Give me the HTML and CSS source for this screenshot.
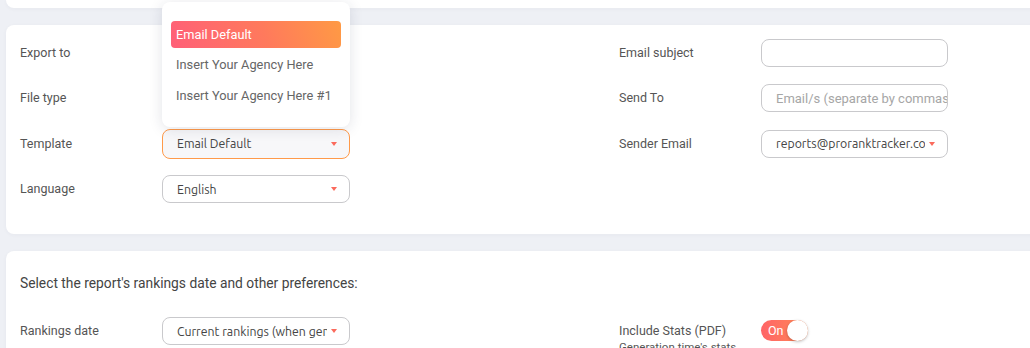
FILE: index.html
```html
<!DOCTYPE html>
<html>
<head>
<meta charset="utf-8">
<link rel="stylesheet" href="styles.css">
</head>
<body>
<div class="page">
  <div class="card card-top"></div>

  <div class="card card-form">
    <div class="form-grid">
      <div class="label c1">Export to</div>
      <div class="field c2"><div class="select"><span class="select-text"></span><span class="caret"></span></div></div>
      <div class="label c4">Email subject</div>
      <div class="field c5"><div class="input"></div></div>

      <div class="label c1">File type</div>
      <div class="field c2"><div class="select"><span class="select-text"></span><span class="caret"></span></div></div>
      <div class="label c4">Send To</div>
      <div class="field c5"><div class="input"><span class="placeholder">Email/s (separate by commas)</span></div></div>

      <div class="label c1">Template</div>
      <div class="field c2 menu-anchor">
        <div class="select select-active"><span class="select-text">Email Default</span><span class="caret"></span></div>
        <div class="menu">
          <div class="menu-item menu-item-active">Email Default</div>
          <div class="menu-item">Insert Your Agency Here</div>
          <div class="menu-item">Insert Your Agency Here #1</div>
        </div>
      </div>
      <div class="label c4">Sender Email</div>
      <div class="field c5"><div class="select"><span class="select-text">reports@proranktracker.com</span><span class="caret"></span></div></div>

      <div class="label c1">Language</div>
      <div class="field c2"><div class="select select-lang"><span class="select-text">English</span><span class="caret"></span></div></div>
    </div>
  </div>

  <div class="card card-prefs">
    <div class="prefs-title">Select the report's rankings date and other preferences:</div>
    <div class="form-grid prefs-grid">
      <div class="label c1">Rankings date</div>
      <div class="field c2"><div class="select select-lang"><span class="select-text">Current rankings (when generated)</span><span class="caret"></span></div></div>
      <div class="label c4 label-stack">
        <span>Include Stats (PDF)</span>
        <span class="sublabel">Generation time's stats</span>
      </div>
      <div class="field c5">
        <div class="toggle"><span class="toggle-text">On</span><span class="knob"></span></div>
      </div>
    </div>
  </div>
</div>
</body>
</html>
```

FILE: styles.css
```css
* { box-sizing: border-box; }
html, body { margin: 0; padding: 0; }
body {
  background: #eef0f5;
  font-family: Roboto, "Liberation Sans", Arial, sans-serif;
  color: #555;
  width: 1030px;
  height: 348px;
  overflow: hidden;
}
.page {
  padding-left: 6px;
  display: flex;
  flex-direction: column;
  gap: 17px;
}
.card {
  background: #fff;
  border-radius: 8px;
  margin-right: -20px;
  box-shadow: 0 1px 4px rgba(40, 50, 80, 0.04);
}
.card-top {
  height: 8px;
  border-radius: 0 0 8px 8px;
}
.card-form {
  height: 209px;
  padding: 13px 0 0 14px;
}
.form-grid {
  display: grid;
  grid-template-columns: 142px 188px 269px 142px 187px;
  grid-auto-rows: 30px;
  row-gap: 15.4px;
  align-items: center;
}
.c1 { grid-column: 1; }
.c2 { grid-column: 2; }
.c4 { grid-column: 4; }
.c5 { grid-column: 5; }
.label {
  font-size: 12.5px;
  color: #555;
  line-height: 16px;
}
.field { position: relative; height: 100%; display: flex; align-items: center; }
.select, .input {
  width: 100%;
  height: 28px;
  border: 1px solid #c9c9cc;
  border-radius: 8px;
  background: #fff;
  display: flex;
  align-items: center;
  padding: 0 8px 0 14px;
  overflow: hidden;
}
.select-active {
  height: 30px;
  border: 1.5px solid #ff9a4a;
  background: #f7f7f9;
}
.select-text {
  flex: 1;
  min-width: 0;
  white-space: nowrap;
  overflow: hidden;
  font-family: Ubuntu, "Open Sans", Lato, sans-serif;
  font-size: 12.3px;
  color: #444;
}
.caret {
  flex: none;
  width: 0;
  height: 0;
  border-left: 3.5px solid transparent;
  border-right: 3.5px solid transparent;
  border-top: 4px solid #fb6a5c;
  margin-left: 4px;
  margin-right: 4px;
}
.placeholder {
  white-space: nowrap;
  font-size: 13px;
  color: #a6a6a6;
}
.menu {
  position: absolute;
  left: 0;
  bottom: calc(100% + 2px);
  width: 188px;
  height: 125px;
  background: #fff;
  border-radius: 8px;
  box-shadow: 0 2px 14px rgba(30, 40, 70, 0.13);
  padding: 19px 9px 0 9px;
  display: flex;
  flex-direction: column;
  gap: 3.5px;
  z-index: 5;
}
.menu-item {
  height: 27px;
  line-height: 27px;
  padding-left: 5px;
  font-size: 12.8px;
  color: #666;
  border-radius: 4px;
  white-space: nowrap;
}
.menu-item-active {
  color: #fff;
  background: linear-gradient(70deg, #ff5f78 0%, #ff7a5c 55%, #ff9a44 100%);
}
.card-prefs {
  height: 120px;
  padding: 24px 0 0 14px;
}
.prefs-title {
  font-size: 13.8px;
  color: #444;
  line-height: 16px;
}
.prefs-grid {
  margin-top: 25px;
}
.label-stack {
  position: relative;
}
.sublabel {
  position: absolute;
  left: 0;
  top: 16px;
  font-size: 11.5px;
  color: #555;
  white-space: nowrap;
}
.toggle {
  width: 47px;
  height: 21px;
  border-radius: 11px;
  background: linear-gradient(90deg, #ff6467, #ff8a55);
  display: flex;
  align-items: center;
  justify-content: space-between;
  padding: 0 0 0 7px;
  position: relative;
  top: -1px;
}
.toggle-text {
  color: #fff;
  font-size: 12.5px;
}
.knob {
  width: 21px;
  height: 21px;
  border-radius: 50%;
  background: #fff;
  box-shadow: 0 1px 3px rgba(0, 0, 0, 0.25);
}
```
